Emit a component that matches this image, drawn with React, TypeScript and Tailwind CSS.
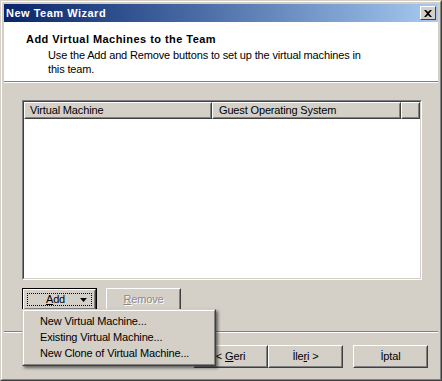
import React from "react";

const raised = "border border-t-white border-l-white border-r-[#404040] border-b-[#404040]";

function Btn({ children, className = "", def = false }: { children: React.ReactNode; className?: string; def?: boolean }) {
  if (def) {
    return (
      <div className={"border border-black " + className}>
        <div className="h-full border border-t-white border-l-white border-r-[#404040] border-b-[#404040]">
          <div className="h-full border border-t-[#d4d0c8] border-l-[#d4d0c8] border-r-[#808080] border-b-[#808080] p-[2px]">
            <div className="h-full border border-dotted border-black flex items-center justify-center">{children}</div>
          </div>
        </div>
      </div>
    );
  }
  return (
    <div className={raised + " " + className}>
      <div className="h-full border border-t-[#d4d0c8] border-l-[#d4d0c8] border-r-[#808080] border-b-[#808080] flex items-center justify-center">
        {children}
      </div>
    </div>
  );
}

export default function App() {
  return (
    <div
      className="w-[442px] h-[381px] bg-[#d4d0c8] text-[11px] tracking-[-0.15px] text-black relative"
      style={{ fontFamily: '"Liberation Sans", Arial, sans-serif' }}
    >
      <div className="w-full h-full border border-t-[#d4d0c8] border-l-[#d4d0c8] border-r-[#404040] border-b-[#404040]">
        <div className="w-full h-full border border-t-white border-l-white border-r-[#808080] border-b-[#808080] p-[2px] flex flex-col">
          {/* Title bar */}
          <div className="h-[18px] shrink-0 bg-gradient-to-r from-[#0a246a] to-[#a6caf0] flex items-center justify-between pl-[2px] pr-[2px]">
            <span className="text-white font-bold text-[11px] tracking-[0.5px] leading-none">New Team Wizard</span>
            <div className="w-[16px] h-[14px] bg-[#d4d0c8] border border-t-white border-l-white border-r-[#404040] border-b-[#404040] flex items-center justify-center">
              <svg width="8" height="7" viewBox="0 0 8 7">
                <path d="M0 0h2l2 2 2-2h2L5 3.5 8 7H6L4 5 2 7H0l3-3.5z" fill="black" />
              </svg>
            </div>
          </div>
          {/* Header */}
          <div className="h-[59px] shrink-0 bg-white pl-[22px] pt-[10px]">
            <div className="font-bold tracking-[0.45px] leading-[14px]">Add Virtual Machines to the Team</div>
            <div className="pl-[22px] leading-[14px] mt-[2px] w-[350px]">
              Use the Add and Remove buttons to set up the virtual machines in this team.
            </div>
          </div>
          <div className="h-px bg-[#808080] shrink-0" />
          <div className="h-px bg-white shrink-0" />
          {/* Body */}
          <div className="flex-1 flex flex-col">
            <div className="pl-[18px] pt-[17px]">
              <div className="w-[400px] h-[180px] border border-t-[#808080] border-l-[#808080] border-r-white border-b-white">
                <div className="w-full h-full border border-t-[#404040] border-l-[#404040] border-r-[#d4d0c8] border-b-[#d4d0c8] bg-white">
                  <div className="flex h-[17px]">
                    <div className={raised + " w-[188px] bg-[#d4d0c8]"}>
                      <div className="h-full border border-t-[#d4d0c8] border-l-[#d4d0c8] border-r-[#808080] border-b-[#808080] pl-[4px] flex items-center">
                        Virtual Machine
                      </div>
                    </div>
                    <div className={raised + " w-[189px] bg-[#d4d0c8]"}>
                      <div className="h-full border border-t-[#d4d0c8] border-l-[#d4d0c8] border-r-[#808080] border-b-[#808080] pl-[5px] flex items-center">
                        Guest Operating System
                      </div>
                    </div>
                    <div className={raised + " flex-1 bg-[#d4d0c8]"}>
                      <div className="h-full border border-t-[#d4d0c8] border-l-[#d4d0c8] border-r-[#808080] border-b-[#808080]" />
                    </div>
                  </div>
                </div>
              </div>
            </div>
            <div className="pl-[18px] pt-[8px] flex gap-[9px]">
              <Btn def className="w-[75px] h-[23px]">
                <span className="relative left-[-4px]"><span className="underline">A</span>dd</span>
                <svg width="7" height="4" viewBox="0 0 7 4" className="absolute ml-[48px]">
                  <path d="M0 0h7L3.5 4z" fill="black" />
                </svg>
              </Btn>
              <Btn className="w-[75px] h-[23px]">
                <span className="text-[#8a8a8a] [text-shadow:1px_1px_0_#fff]"><span className="underline">R</span>emove</span>
              </Btn>
            </div>
            <div className="mt-[20px] h-px bg-[#808080]" />
            <div className="h-px bg-white" />
            <div className="flex pt-[12px] pl-[189px]">
              <Btn className="w-[75px] h-[23px]">&lt; <span className="underline ml-[3px]">G</span>eri</Btn>
              <Btn className="w-[75px] h-[23px]">İle<span className="underline">r</span>i &gt;</Btn>
              <Btn className="w-[75px] h-[23px] ml-[10px]">İptal</Btn>
            </div>
          </div>
        </div>
      </div>
      {/* Dropdown menu */}
      <div className="absolute left-[22px] top-[309px] w-[194px] h-[57px] shadow-[2px_2px_3px_rgba(0,0,0,0.55)] bg-[#d4d0c8] border border-t-[#d4d0c8] border-l-[#d4d0c8] border-r-[#404040] border-b-[#404040]">
        <div className="w-full h-full border border-t-white border-l-white border-r-[#808080] border-b-[#808080] pt-[2px]">
          <div className="h-[16px] leading-[16px] pl-[16px]">New Virtual Machine...</div>
          <div className="h-[16px] leading-[16px] pl-[16px]">Existing Virtual Machine...</div>
          <div className="h-[16px] leading-[16px] pl-[16px]">New Clone of Virtual Machine...</div>
        </div>
      </div>
    </div>
  );
}
